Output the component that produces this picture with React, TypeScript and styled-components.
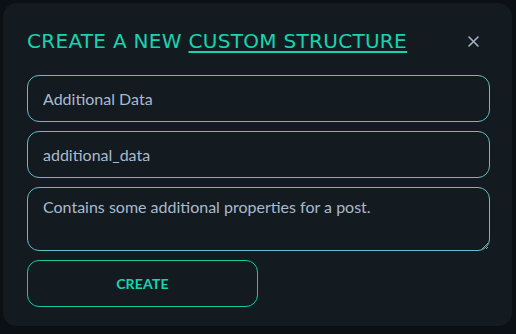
import React from "react";
import styled, { createGlobalStyle } from "styled-components";

const Global = createGlobalStyle`
  html, body { margin: 0; padding: 0; background: #0b1015; }
  body { width: 516px; height: 334px; overflow: hidden; }
  * { box-sizing: border-box; }
`;

const Screen = styled.div`
  width: 516px;
  height: 334px;
  padding: 3px 4px 8px 3px;
  display: flex;
`;

const Modal = styled.div`
  flex: 1;
  background: #131b21;
  border-radius: 14px;
  padding: 22px 22px 0 24px;
  display: flex;
  flex-direction: column;
`;

const Header = styled.div`
  display: flex;
  align-items: center;
  justify-content: space-between;
  height: 32px;
  margin-bottom: 18px;
`;

const Title = styled.h2`
  margin: 0;
  font-family: "DejaVu Sans", sans-serif;
  font-weight: 400;
  font-size: 20px;
  letter-spacing: 0.3px;
  color: #17d4b0;
  white-space: nowrap;
`;

const Link = styled.span`
  text-decoration: underline;
  text-underline-offset: 3px;
  text-decoration-thickness: 1.5px;
`;

const Close = styled.button`
  background: none;
  border: none;
  padding: 0;
  margin-right: 10px;
  width: 14px;
  height: 14px;
  display: flex;
  align-items: center;
  justify-content: center;
  cursor: pointer;
`;

const Form = styled.div`
  display: flex;
  flex-direction: column;
  gap: 9px;
`;

const fieldBase = `
  width: 100%;
  background: transparent;
  border: 1.5px solid #66bcc6;
  border-radius: 12px;
  color: #a9bacd;
  font-family: "Lato", sans-serif;
  font-size: 16px;
  padding: 0 15px;
  outline: none;
`;

const Input = styled.input`
  ${fieldBase}
  height: 47px;
`;

const TextArea = styled.textarea`
  ${fieldBase}
  height: 64px;
  padding-top: 9px;
  resize: vertical;
  line-height: 20px;
`;

const Button = styled.button`
  width: 231px;
  height: 47px;
  background: transparent;
  border: 1.5px solid #17c9a3;
  border-radius: 12px;
  color: #17d4b0;
  font-family: "Lato", sans-serif;
  font-weight: 700;
  font-size: 14px;
  letter-spacing: 0.2px;
  cursor: pointer;
`;

export default function App() {
  return (
    <>
      <Global />
      <Screen>
        <Modal>
          <Header>
            <Title>
              CREATE A NEW <Link>CUSTOM STRUCTURE</Link>
            </Title>
            <Close aria-label="Close">
              <svg width="11" height="11" viewBox="0 0 11 11">
                <path d="M1 1 L10 10 M10 1 L1 10" stroke="#a6b3c4" strokeWidth="1.6" strokeLinecap="round" />
              </svg>
            </Close>
          </Header>
          <Form>
            <Input defaultValue="Additional Data" />
            <Input defaultValue="additional_data" />
            <TextArea defaultValue="Contains some additional properties for a post." />
            <Button>CREATE</Button>
          </Form>
        </Modal>
      </Screen>
    </>
  );
}
